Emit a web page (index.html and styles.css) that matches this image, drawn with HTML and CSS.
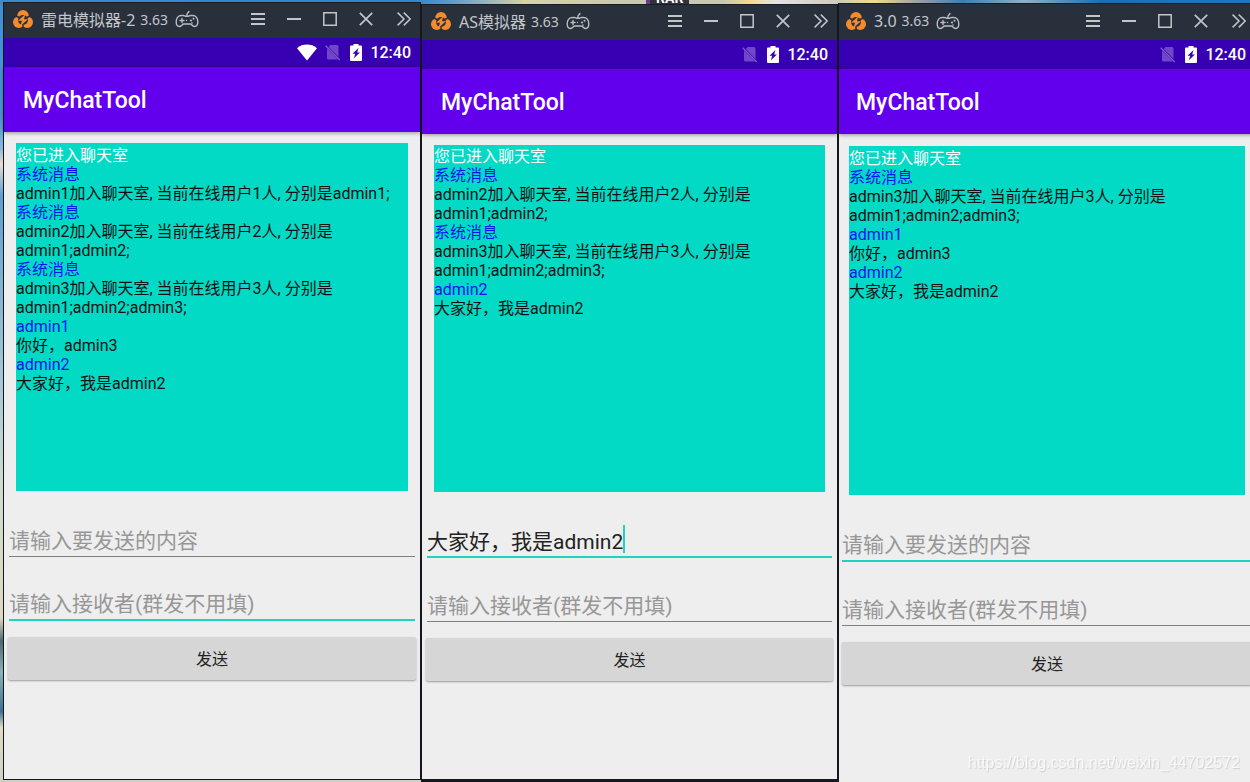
FILE: index.html
```html
<!DOCTYPE html>
<html lang="zh-CN">
<head>
<meta charset="utf-8">
<title>MyChatTool</title>
<link rel="stylesheet" href="styles.css">
</head>
<body>
<svg class="sprite" aria-hidden="true">
  <symbol id="logo" viewBox="0 0 20 18">
    <g fill="#f68b2c"><circle cx="10" cy="5.800" r="5.800"/><circle cx="5.800" cy="12.200" r="5.800"/><circle cx="14.200" cy="12.200" r="5.800"/></g>
    <path d="M2 5.500 6 7.500M18 5.500 14 7.500M10 18.500V15" stroke="#28303c" stroke-width="1.500"/>
    <circle cx="10" cy="10" r="5" fill="#28303c"/>
    <path d="M12.300 4.300 5 10.700H9L7.300 16 15 9.300H11Z" fill="#f68b2c"/>
  </symbol>
  <symbol id="pad" viewBox="0 0 24 18">
    <g fill="none" stroke="#b9bcc1" stroke-width="1.400" stroke-linecap="round">
      <path d="M8.500 5.500H6.500C3 5.500 1.200 8.500 1.200 11.800c0 3 1.300 4.700 3.100 4.700 2.200 0 2.700-2.500 4.500-2.500h6.400c1.800 0 2.300 2.500 4.500 2.500 1.800 0 3.100-1.700 3.100-4.700 0-3.300-1.800-6.300-5.300-6.300h-2c-1.200 0-1.200.8-3.500.8s-2.300-.8-3.500-.8Z"/>
      <path d="M12 6V4.500c0-1 .4-1.500 1-1.700L14 1.500M5 10.500h4M7 8.500v4"/>
    </g>
    <g fill="#b9bcc1"><circle cx="16" cy="10.500" r="1.100"/><circle cx="18.500" cy="8.700" r="1"/><circle cx="11.500" cy="10.500" r=".7"/><circle cx="17" cy="13" r=".8"/></g>
  </symbol>
  <symbol id="menu" viewBox="0 0 14 14"><path d="M0 2h14M0 7h14M0 12h14" stroke="#c3c6c9" stroke-width="2"/></symbol>
  <symbol id="min" viewBox="0 0 14 14"><path d="M0 7h14" stroke="#c3c6c9" stroke-width="2"/></symbol>
  <symbol id="max" viewBox="0 0 14 14"><path d="M.8.8h12.400v12.400H.8Z" fill="none" stroke="#c3c6c9" stroke-width="1.500"/></symbol>
  <symbol id="close" viewBox="0 0 14 14"><path d="m.8.8 12.400 12.400M13.200.8.8 13.200" stroke="#c3c6c9" stroke-width="1.700"/></symbol>
  <symbol id="more" viewBox="0 0 14 14"><path d="M.6.6 7 7 .6 13.400M6.800.6 13.200 7l-6.400 6.400" fill="none" stroke="#c3c6c9" stroke-width="1.500"/></symbol>
  <symbol id="wifi" viewBox="0 0 20 17"><path d="M10 16.500 0 4.200C2.800 1.600 6.200.5 10 .5s7.200 1.100 10 3.700Z" fill="#fff"/></symbol>
  <symbol id="nosim" viewBox="0 0 16 17"><path d="M5.500 1H12a1.500 1.500 0 0 1 1.500 1.500V13L3.800 3ZM2 4.500 13 15.500H3.500A1.500 1.500 0 0 1 2 14Z" fill="#7146c8"/><path d="m.7 1.700 14 14.300" stroke="#7e5ccf" stroke-width="1.300"/></symbol>
  <symbol id="battery" viewBox="0 0 12 17"><path d="M3.500 0h5v1.500H11a1 1 0 0 1 1 1V16a1 1 0 0 1-1 1H1a1 1 0 0 1-1-1V2.500a1 1 0 0 1 1-1h2.500Z" fill="#fff"/><path d="M8.500 4 2.500 9.800h2.700L3.900 14.300 9.900 8.500H7.200Z" fill="#3700b3"/></symbol>
</svg>

<div class="archive" aria-hidden="true">RAR</div>

<main class="desktop">
  <section class="window window-a">
    <header class="titlebar">
      <svg class="logo"><use href="#logo"/></svg>
      <span class="name">雷电模拟器-2</span><span class="version">3.63</span>
      <svg class="pad"><use href="#pad"/></svg>
      <div class="controls">
        <button aria-label="菜单"><svg><use href="#menu"/></svg></button>
        <button aria-label="最小化"><svg><use href="#min"/></svg></button>
        <button aria-label="最大化"><svg><use href="#max"/></svg></button>
        <button aria-label="关闭"><svg><use href="#close"/></svg></button>
        <button class="last" aria-label="更多"><svg><use href="#more"/></svg></button>
      </div>
    </header>
    <div class="status">
      <svg class="wifi"><use href="#wifi"/></svg>
      <svg class="nosim"><use href="#nosim"/></svg>
      <svg class="battery"><use href="#battery"/></svg>
      <time>12:40</time>
    </div>
    <h1 class="appbar">MyChatTool</h1>
    <div class="screen">
      <div class="chat">
        <p class="welcome">您已进入聊天室</p>
        <p class="from">系统消息</p>
        <p>admin1加入聊天室, 当前在线用户1人, 分别是admin1;</p>
        <p class="from">系统消息</p>
        <p>admin2加入聊天室, 当前在线用户2人, 分别是<br>admin1;admin2;</p>
        <p class="from">系统消息</p>
        <p>admin3加入聊天室, 当前在线用户3人, 分别是<br>admin1;admin2;admin3;</p>
        <p class="from">admin1</p>
        <p>你好，admin3</p>
        <p class="from">admin2</p>
        <p>大家好，我是admin2</p>
      </div>
      <div class="field"><input type="text" aria-label="发送的内容" placeholder="请输入要发送的内容"></div>
      <div class="field active"><input type="text" aria-label="接收者" placeholder="请输入接收者(群发不用填)"></div>
      <button class="send">发送</button>
    </div>
  </section>

  <section class="window window-b">
    <header class="titlebar">
      <svg class="logo"><use href="#logo"/></svg>
      <span class="name">AS模拟器</span><span class="version">3.63</span>
      <svg class="pad"><use href="#pad"/></svg>
      <div class="controls">
        <button aria-label="菜单"><svg><use href="#menu"/></svg></button>
        <button aria-label="最小化"><svg><use href="#min"/></svg></button>
        <button aria-label="最大化"><svg><use href="#max"/></svg></button>
        <button aria-label="关闭"><svg><use href="#close"/></svg></button>
        <button class="last" aria-label="更多"><svg><use href="#more"/></svg></button>
      </div>
    </header>
    <div class="status">
      <svg class="nosim"><use href="#nosim"/></svg>
      <svg class="battery"><use href="#battery"/></svg>
      <time>12:40</time>
    </div>
    <h1 class="appbar">MyChatTool</h1>
    <div class="screen">
      <div class="chat">
        <p class="welcome">您已进入聊天室</p>
        <p class="from">系统消息</p>
        <p>admin2加入聊天室, 当前在线用户2人, 分别是<br>admin1;admin2;</p>
        <p class="from">系统消息</p>
        <p>admin3加入聊天室, 当前在线用户3人, 分别是<br>admin1;admin2;admin3;</p>
        <p class="from">admin2</p>
        <p>大家好，我是admin2</p>
      </div>
      <div class="field active typing"><input type="text" aria-label="发送的内容" value="大家好，我是admin2"><span class="caret"></span></div>
      <div class="field"><input type="text" aria-label="接收者" placeholder="请输入接收者(群发不用填)"></div>
      <button class="send">发送</button>
    </div>
  </section>

  <section class="window window-c">
    <header class="titlebar">
      <svg class="logo"><use href="#logo"/></svg>
      <span class="name">3.0</span><span class="version">3.63</span>
      <svg class="pad"><use href="#pad"/></svg>
      <div class="controls">
        <button aria-label="菜单"><svg><use href="#menu"/></svg></button>
        <button aria-label="最小化"><svg><use href="#min"/></svg></button>
        <button aria-label="最大化"><svg><use href="#max"/></svg></button>
        <button aria-label="关闭"><svg><use href="#close"/></svg></button>
        <button class="last" aria-label="更多"><svg><use href="#more"/></svg></button>
      </div>
    </header>
    <div class="status">
      <svg class="nosim"><use href="#nosim"/></svg>
      <svg class="battery"><use href="#battery"/></svg>
      <time>12:40</time>
    </div>
    <h1 class="appbar">MyChatTool</h1>
    <div class="screen">
      <div class="chat">
        <p class="welcome">您已进入聊天室</p>
        <p class="from">系统消息</p>
        <p>admin3加入聊天室, 当前在线用户3人, 分别是<br>admin1;admin2;admin3;</p>
        <p class="from">admin1</p>
        <p>你好，admin3</p>
        <p class="from">admin2</p>
        <p>大家好，我是admin2</p>
      </div>
      <div class="field active"><input type="text" aria-label="发送的内容" placeholder="请输入要发送的内容"></div>
      <div class="field"><input type="text" aria-label="接收者" placeholder="请输入接收者(群发不用填)"></div>
      <button class="send">发送</button>
    </div>
  </section>
</main>
<div class="watermark">https://blog.csdn.net/weixin_44702572</div>
</body>
</html>
```
FILE: styles.css
```css
* { box-sizing: border-box; }

body {
  margin: 0;
  overflow: hidden;
  font-family: Roboto, "Noto Sans CJK SC", sans-serif;
  background:
    linear-gradient(90deg, #3a8ad0 0%, #2f86cf 33%, #5a9bd0 36%, #d8d2a8 42%, #c9c8b2 50%, #c9c8b2 58%, #f6dc8c 60%, #e4e4e4 62%, #cfcabd 67%, #f2da8c 70%, #8e9aa8 74%, #3d7fb2 77%, #8fb0c8 82%, #1d6fae 88%, #1d78bb 100%) top / 100% 6px no-repeat,
    linear-gradient(#3f8fd6 0%, #4a95d8 15%, #8cb8dc 19%, #eadfd0 21%, #5f9fd0 25%, #a9cbd8 50%, #cfdccb 62%, #ddd8c0 79%, #4c6a70 82%, #8ab4b8 86%, #3f6f90 91%, #e0dcc4 93%, #ccd0c4 100%);
}

button, input { font: inherit; border: 0; padding: 0; background: none; color: inherit; }
svg { display: block; flex: none; }
h1, p { margin: 0; }
.sprite { position: absolute; width: 0; height: 0; }

/* Desktop shortcut peeking out from behind the windows */
.archive {
  position: absolute;
  left: 646px;
  top: -12px;
  padding: 0 6px;
  border-left: 4px solid #6b3a8c;
  border-radius: 2px;
  background: #33313a;
  color: #fff;
  font-size: 14px;
  line-height: 20px;
  font-weight: 700;
}

/* The last window runs slightly past the right edge of the desktop */
.desktop {
  position: relative;
  display: grid;
  grid-template-columns: 418fr 417fr 417fr;
  min-height: 100vh;
  padding-left: 3px;
  margin-right: -5px;
}

.window {
  --title-inset: 19px;
  --chat-inset: 12px;
  --field-inset: 5px;
  --button-inset: 4px;
  --chat-height: 348px;
  --chat-gap: 2px;
  display: flex;
  flex-direction: column;
  border: 1px solid #14171e;
  border-top: 0;
  background: #eee;
}
.window-a { margin: 2px 0; }
.window-b { margin: 4px 0 0; border-bottom-width: 3px; --chat-height: 347px; }
.window-c {
  margin: 3px 0 0;
  border-bottom: 0;
  border-right: 0;
  --title-inset: 17px;
  --chat-inset: 10px;
  --field-inset: 3px;
  --button-inset: 3px;
  --chat-height: 349px;
  --chat-gap: 3px;
}

.titlebar {
  display: flex;
  align-items: center;
  height: 36px;
  padding: 0 9px 2px;
  background: #28303c;
  color: #c4c6c9;
  box-shadow: inset 0 1px #181c24;
}
.window-c .titlebar { height: 37px; padding-left: 7px; }
.logo { width: 20px; height: 18px; margin-right: 8px; }
.name, .version { font-family: "Noto Sans", "Noto Sans CJK SC", sans-serif; white-space: nowrap; }
.name { font-size: 16px; }
.version { margin-left: 5px; font-size: 14px; }
.pad { width: 24px; height: 18px; margin-left: 7px; }
.controls { display: flex; gap: 22px; margin-left: auto; }
.controls button, .controls svg { display: block; width: 14px; height: 14px; }
.controls .last { margin-left: 2px; }

.status {
  display: flex;
  align-items: center;
  justify-content: flex-end;
  height: 29px;
  padding-right: 9px;
  background: #3700b3;
  color: #fff;
}
.wifi { width: 20px; height: 17px; margin-right: 8px; }
.nosim { width: 16px; height: 17px; margin-right: 9px; }
.battery { width: 12px; height: 17px; margin-right: 8px; }
time { font-size: 16px; font-weight: 500; line-height: 20px; padding-top: 1px; }

.appbar {
  height: 65px;
  padding-left: var(--title-inset);
  background: #6200ee;
  box-shadow: 0 1px 4px rgba(0, 0, 0, .4);
  color: #fff;
  font-size: 23px;
  font-weight: 500;
  line-height: 68px;
}

.screen { display: flex; flex-direction: column; padding-top: 11px; }
.window-c .screen { padding-top: 12px; }

.chat {
  height: var(--chat-height);
  margin: 0 var(--chat-inset) var(--chat-gap);
  padding-top: 3px;
  background: #03dac5;
  color: #111;
  font-size: 16px;
  line-height: 19px;
}
.window-b .chat { padding-top: 2px; }
.chat .welcome { color: #fff; }
.chat .from { color: #0a14f0; }

.field {
  display: flex;
  align-items: flex-end;
  height: 64px;
  margin: 0 var(--field-inset);
  border-bottom: 1px solid #808080;
  font-size: 21px;
}
.field.active { border-bottom: 2px solid #1fd2c2; }
.field input { width: 100%; height: 31px; outline: 0; color: #222; }
.field input::placeholder { color: #979797; opacity: 1; }
.field.typing input { width: auto; height: 33px; field-sizing: content; }
.caret { width: 2px; height: 28px; margin-bottom: 3px; background: #1fd2c2; }

.send {
  height: 43px;
  margin: 16px var(--button-inset) 0;
  padding-bottom: 2px;
  border-radius: 2px;
  background: #d6d6d6;
  box-shadow: 0 1px 2px rgba(0, 0, 0, .35);
  color: #222;
  font-size: 16px;
}

.watermark {
  position: fixed;
  right: 10px;
  bottom: 9px;
  color: #f8f8f8;
  font: 16px/20px "Liberation Sans", sans-serif;
  text-shadow: 1px 1px 1px #d0d0d0;
}
```
